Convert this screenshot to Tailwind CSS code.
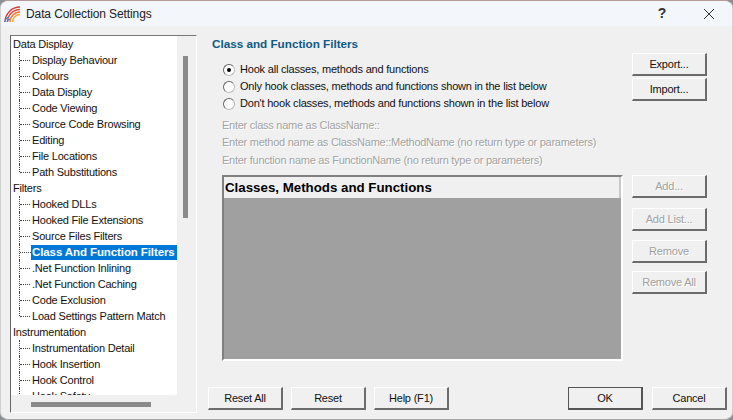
<!DOCTYPE html>
<html lang="en">
<head>
    <meta charset="UTF-8">
    <title>Data Collection Settings</title>
    <script src="https://cdn.jsdelivr.net/npm/@tailwindcss/browser@4"></script>
</head>
<body class="bg-[#8a8f94] overflow-hidden">
<div class="w-[733px] h-[420px] relative overflow-hidden bg-[#f0f0f0] rounded-t-[8px] rounded-b-[8px] border-t border-t-[#b89a98] border-x border-x-[#d0d0d0] border-b border-b-[#a8a8a8] font-['Liberation_Sans',sans-serif] text-[11px] tracking-[-0.2px] text-[#111] whitespace-nowrap">

    <!-- Title bar -->
    <div class="h-[25px] bg-[#f3f6fb] flex items-center pl-[3px]">
        <svg width="18" height="18" viewBox="0 0 18 18" fill="none" class="mr-[4px]">
            <path d="M1 17A15 15 0 0 1 16 2" stroke="#d83c3c" stroke-width="1.4"/>
            <path d="M3.5 17A12.5 12.5 0 0 1 16 4.5" stroke="#e04a3a" stroke-width="1.4"/>
            <path d="M6 17A10 10 0 0 1 16 7" stroke="#ee7b30" stroke-width="1.4"/>
            <path d="M8.5 17A7.5 7.5 0 0 1 16 9.5" stroke="#f2a93b" stroke-width="1.4"/>
            <path d="M1 17A5 5 0 0 1 5 12.2" stroke="#3f86d8" stroke-width="1.3"/>
            <path d="M3.2 17A2.8 2.8 0 0 1 6 14.4" stroke="#3f86d8" stroke-width="1.3"/>
        </svg>
        <span class="text-[12px] tracking-[-0.1px] text-[#222]">Data Collection Settings</span>
        <span class="ml-auto mr-[37px] text-[14px] font-bold text-[#333]">?</span>
        <svg width="12" height="12" viewBox="0 0 12 12" class="mr-[17px]" fill="none"><path d="M1 1l10 10M11 1L1 11" stroke="#333" stroke-width="1"/></svg>
    </div>

    <div class="flex pl-[9px] pt-[9px]">
        <!-- Tree -->
        <div class="w-[187px] h-[378px] relative bg-[#f0f0f0] border-t border-l border-r border-b border-t-[#777] border-l-[#666] border-r-white border-b-white shrink-0">
            <div class="w-[166px] h-[359px] bg-white overflow-hidden pl-[2px] rounded-br-[2px]">
                <div class="h-[16px] leading-[16px]">Data Display</div>
                <div class="flex h-[16px] leading-[16px] items-center"><span class="w-[7px] h-[16px] border-r border-dotted border-r-[#444]"></span><span class="w-[10px] border-t border-dotted border-t-[#444] mr-[2px]"></span>Display Behaviour</div>
                <div class="flex h-[16px] leading-[16px] items-center"><span class="w-[7px] h-[16px] border-r border-dotted border-r-[#444]"></span><span class="w-[10px] border-t border-dotted border-t-[#444] mr-[2px]"></span>Colours</div>
                <div class="flex h-[16px] leading-[16px] items-center"><span class="w-[7px] h-[16px] border-r border-dotted border-r-[#444]"></span><span class="w-[10px] border-t border-dotted border-t-[#444] mr-[2px]"></span>Data Display</div>
                <div class="flex h-[16px] leading-[16px] items-center"><span class="w-[7px] h-[16px] border-r border-dotted border-r-[#444]"></span><span class="w-[10px] border-t border-dotted border-t-[#444] mr-[2px]"></span>Code Viewing</div>
                <div class="flex h-[16px] leading-[16px] items-center"><span class="w-[7px] h-[16px] border-r border-dotted border-r-[#444]"></span><span class="w-[10px] border-t border-dotted border-t-[#444] mr-[2px]"></span>Source Code Browsing</div>
                <div class="flex h-[16px] leading-[16px] items-center"><span class="w-[7px] h-[16px] border-r border-dotted border-r-[#444]"></span><span class="w-[10px] border-t border-dotted border-t-[#444] mr-[2px]"></span>Editing</div>
                <div class="flex h-[16px] leading-[16px] items-center"><span class="w-[7px] h-[16px] border-r border-dotted border-r-[#444]"></span><span class="w-[10px] border-t border-dotted border-t-[#444] mr-[2px]"></span>File Locations</div>
                <div class="flex h-[16px] leading-[16px] items-center"><span class="w-[7px] h-[8px] self-start border-r border-dotted border-r-[#444]"></span><span class="w-[10px] border-t border-dotted border-t-[#444] mr-[2px]"></span>Path Substitutions</div>
                <div class="h-[16px] leading-[16px]">Filters</div>
                <div class="flex h-[16px] leading-[16px] items-center"><span class="w-[7px] h-[16px] border-r border-dotted border-r-[#444]"></span><span class="w-[10px] border-t border-dotted border-t-[#444] mr-[2px]"></span>Hooked DLLs</div>
                <div class="flex h-[16px] leading-[16px] items-center"><span class="w-[7px] h-[16px] border-r border-dotted border-r-[#444]"></span><span class="w-[10px] border-t border-dotted border-t-[#444] mr-[2px]"></span>Hooked File Extensions</div>
                <div class="flex h-[16px] leading-[16px] items-center"><span class="w-[7px] h-[16px] border-r border-dotted border-r-[#444]"></span><span class="w-[10px] border-t border-dotted border-t-[#444] mr-[2px]"></span>Source Files Filters</div>
                <div class="flex h-[16px] leading-[16px] items-center"><span class="w-[7px] h-[16px] border-r border-dotted border-r-[#444] shrink-0"></span><span class="w-[11px] border-t border-dotted border-t-[#444] shrink-0"></span><span class="bg-[#0078d7] text-white pl-[1px] h-[15px] leading-[15px] font-bold text-[11.5px] tracking-[-0.1px] w-[146px] overflow-hidden shrink-0">Class And Function Filters</span></div>
                <div class="flex h-[16px] leading-[16px] items-center"><span class="w-[7px] h-[16px] border-r border-dotted border-r-[#444]"></span><span class="w-[10px] border-t border-dotted border-t-[#444] mr-[2px]"></span>.Net Function Inlining</div>
                <div class="flex h-[16px] leading-[16px] items-center"><span class="w-[7px] h-[16px] border-r border-dotted border-r-[#444]"></span><span class="w-[10px] border-t border-dotted border-t-[#444] mr-[2px]"></span>.Net Function Caching</div>
                <div class="flex h-[16px] leading-[16px] items-center"><span class="w-[7px] h-[16px] border-r border-dotted border-r-[#444]"></span><span class="w-[10px] border-t border-dotted border-t-[#444] mr-[2px]"></span>Code Exclusion</div>
                <div class="flex h-[16px] leading-[16px] items-center"><span class="w-[7px] h-[8px] self-start border-r border-dotted border-r-[#444]"></span><span class="w-[10px] border-t border-dotted border-t-[#444] mr-[2px]"></span>Load Settings Pattern Match</div>
                <div class="h-[16px] leading-[16px]">Instrumentation</div>
                <div class="flex h-[16px] leading-[16px] items-center"><span class="w-[7px] h-[16px] border-r border-dotted border-r-[#444]"></span><span class="w-[10px] border-t border-dotted border-t-[#444] mr-[2px]"></span>Instrumentation Detail</div>
                <div class="flex h-[16px] leading-[16px] items-center"><span class="w-[7px] h-[16px] border-r border-dotted border-r-[#444]"></span><span class="w-[10px] border-t border-dotted border-t-[#444] mr-[2px]"></span>Hook Insertion</div>
                <div class="flex h-[16px] leading-[16px] items-center"><span class="w-[7px] h-[16px] border-r border-dotted border-r-[#444]"></span><span class="w-[10px] border-t border-dotted border-t-[#444] mr-[2px]"></span>Hook Control</div>
                <div class="flex h-[16px] leading-[16px] items-center"><span class="w-[7px] h-[16px] border-r border-dotted border-r-[#444]"></span><span class="w-[10px] border-t border-dotted border-t-[#444] mr-[2px]"></span>Hook Safety</div>
            </div>
            <!-- scrollbars sit over the tree edge -->
            <div class="absolute left-[172px] top-[20px] w-[5px] h-[162px] bg-[#8a8a8a]"></div>
            <div class="absolute left-[20px] top-[366px] w-[120px] h-[5px] bg-[#8a8a8a]"></div>
        </div>

        <!-- Right side -->
        <div class="w-[535px] pl-[15px] h-[385px] flex flex-col shrink-0">
            <div class="font-bold text-[#0f5a86] text-[11.7px] tracking-normal leading-[16px] pt-[1px]">Class and Function Filters</div>
            <div class="flex h-[322px] mt-[1px]">
                <div class="w-[420px] pl-[10px] shrink-0">
                    <div class="pt-[8px]">
                        <div class="flex items-center h-[17px]"><span class="w-[12px] h-[12px] rounded-full bg-white border border-t-[#666] border-l-[#666] border-r-[#bbb] border-b-[#bbb] flex items-center justify-center mr-[5px] ml-[1px]"><span class="w-[4px] h-[4px] rounded-full bg-black"></span></span>Hook all classes, methods and functions</div>
                        <div class="flex items-center h-[17px]"><span class="w-[12px] h-[12px] rounded-full bg-white border border-t-[#666] border-l-[#666] border-r-[#bbb] border-b-[#bbb] mr-[5px] ml-[1px]"></span>Only hook classes, methods and functions shown in the list below</div>
                        <div class="flex items-center h-[17px]"><span class="w-[12px] h-[12px] rounded-full bg-white border border-t-[#666] border-l-[#666] border-r-[#bbb] border-b-[#bbb] mr-[5px] ml-[1px]"></span>Don't hook classes, methods and functions shown in the list below</div>
                    </div>
                    <div class="text-[#a3a3a3] [text-shadow:1px_1px_0_#fff] tracking-[-0.26px] mt-[5px]">
                        <div class="h-[17px] leading-[17px]">Enter class name as ClassName::</div>
                        <div class="h-[17px] leading-[17px]">Enter method name as ClassName::MethodName (no return type or parameters)</div>
                        <div class="h-[18px] leading-[18px]">Enter function name as FunctionName (no return type or parameters)</div>
                    </div>
                    <div class="mt-[6px] w-[401px] h-[186px] border-2 border-t-[#808080] border-l-[#808080] border-r-white border-b-white bg-[#a0a0a0] flex flex-col">
                        <div class="h-[21px] bg-[#f0f0f0] border-r-2 border-r-[#c8c8c8] font-bold text-black text-[13.3px] tracking-normal leading-[21px] pl-[1px]">Classes, Methods and Functions</div>
                    </div>
                </div>
                <div class="w-[75px] flex flex-col shrink-0">
                    <button class="w-[75px] h-[23px] bg-[#f0f0f0] border border-t-white border-l-white border-r-2 border-b-2 border-r-[#6b6b6b] border-b-[#6b6b6b] leading-none">Export...</button>
                    <button class="w-[75px] h-[23px] mt-[2px] bg-[#f0f0f0] border border-t-white border-l-white border-r-2 border-b-2 border-r-[#6b6b6b] border-b-[#6b6b6b] leading-none">Import...</button>
                    <button class="w-[75px] h-[23px] mt-[74px] bg-[#f0f0f0] border border-t-white border-l-white border-r-2 border-b-2 border-r-[#6b6b6b] border-b-[#6b6b6b] leading-none text-[#a0a0a0] [text-shadow:1px_1px_0_#fff]">Add...</button>
                    <button class="w-[75px] h-[23px] mt-[10px] bg-[#f0f0f0] border border-t-white border-l-white border-r-2 border-b-2 border-r-[#6b6b6b] border-b-[#6b6b6b] leading-none text-[#a0a0a0] [text-shadow:1px_1px_0_#fff]">Add List...</button>
                    <button class="w-[75px] h-[23px] mt-[9px] bg-[#f0f0f0] border border-t-white border-l-white border-r-2 border-b-2 border-r-[#6b6b6b] border-b-[#6b6b6b] leading-none text-[#a0a0a0] [text-shadow:1px_1px_0_#fff]">Remove</button>
                    <button class="w-[75px] h-[23px] mt-[8px] bg-[#f0f0f0] border border-t-white border-l-white border-r-2 border-b-2 border-r-[#6b6b6b] border-b-[#6b6b6b] leading-none text-[#a0a0a0] [text-shadow:1px_1px_0_#fff]">Remove All</button>
                </div>
            </div>
            <!-- Bottom buttons -->
            <div class="flex mt-[12px] items-start ml-[-4px]">
                <button class="w-[75px] h-[23px] bg-[#f0f0f0] border border-t-white border-l-white border-r-2 border-b-2 border-r-[#6b6b6b] border-b-[#6b6b6b] leading-none">Reset All</button>
                <button class="w-[75px] h-[23px] ml-[8px] bg-[#f0f0f0] border border-t-white border-l-white border-r-2 border-b-2 border-r-[#6b6b6b] border-b-[#6b6b6b] leading-none">Reset</button>
                <button class="w-[75px] h-[23px] ml-[8px] bg-[#f0f0f0] border border-t-white border-l-white border-r-2 border-b-2 border-r-[#6b6b6b] border-b-[#6b6b6b] leading-none">Help (F1)</button>
                <button class="w-[75px] h-[23px] ml-[119px] bg-[#f0f0f0] border border-[#555] border-r-2 border-b-2 leading-none">OK</button>
                <button class="w-[75px] h-[23px] ml-[9px] bg-[#f0f0f0] border border-t-white border-l-white border-r-2 border-b-2 border-r-[#6b6b6b] border-b-[#6b6b6b] leading-none">Cancel</button>
            </div>
        </div>
    </div>
</div>
</body>
</html>
